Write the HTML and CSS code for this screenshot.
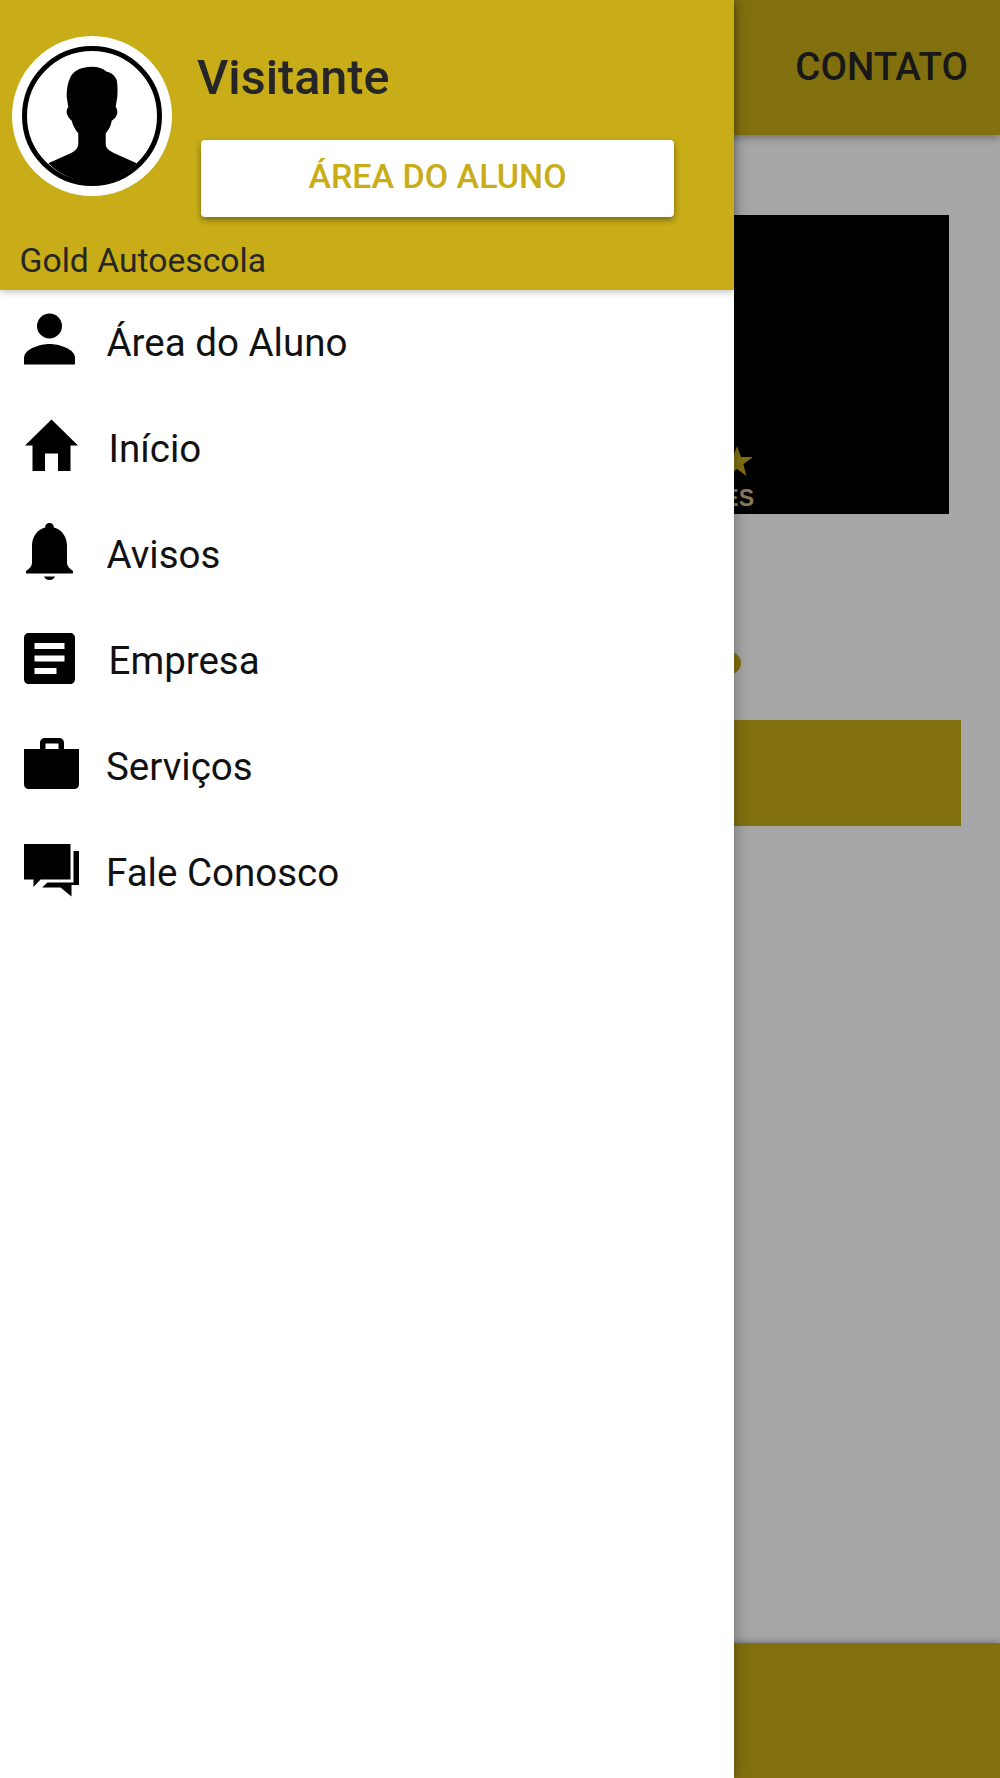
FILE: index.html
```html
<!DOCTYPE html>
<html lang="pt-BR">
<head>
    <meta charset="UTF-8">
    <meta name="viewport" content="width=device-width, initial-scale=1.0">
    <title>Gold Autoescola</title>
    <link rel="stylesheet" href="styles.css">
</head>
<body>
<div class="app">
    <!-- pagina atras do menu -->
    <div class="page">
        <header class="topbar">
            <span class="tab">CONTATO</span>
        </header>
        <main class="content">
            <div class="logo">
                <svg class="logo-star" viewBox="0 0 40 38"><polygon points="20,0 25,14 40,14 28,23 32,38 20,29 8,38 12,23 0,14 15,14"/></svg>
                <span class="logo-text">ES</span>
            </div>
            <div class="dot"></div>
            <div class="cta"></div>
        </main>
        <footer class="bottombar"></footer>
    </div>
    <div class="scrim"></div>

    <!-- menu lateral -->
    <aside class="drawer">
        <div class="drawer-head">
            <div class="head-row">
                <svg class="avatar" viewBox="0 0 160 160">
                    <circle cx="80" cy="80" r="80" fill="#fff"/>
                    <path d="M80 30.700C70 30.700 62 34 58.500 41 55.500 47 54.500 54 54.700 60.700L56.300 71.300C54.500 73 54.300 76 55 78 56 81 58 83.500 59.700 84.700 61 90 63.500 94 66.300 97.300L66.300 108C66.300 112 63 115 59.700 116.700L36.300 127.300A62 62 0 0 0 124.700 127.300L101.300 116.700C97 114.500 93.700 112 93.700 108L93.700 97.300C96.500 94 99 90 99.700 84.700 102 83.500 104.500 81 105.300 77.300 105.500 75 105 72.500 103.700 70.700L105.300 60.700C105.800 54 105.500 48 104.700 44 102 38 98.500 36.500 94.700 35.700 91 32.500 86 30.700 80 30.700Z"/>
                    <circle cx="80" cy="80" r="67.500" fill="none" stroke="#000" stroke-width="5"/>
                </svg>
                <div class="head-col">
                    <div class="user-name">Visitante</div>
                    <button class="login-btn" type="button">ÁREA DO ALUNO</button>
                </div>
            </div>
            <div class="brand">Gold Autoescola</div>
        </div>
        <ul class="menu">
            <li class="menu-item">
                <svg class="menu-icon" viewBox="0 0 64 64"><circle cx="33.500" cy="19" r="12.500"/><path d="M8 57.500V51C8 41.500 25 37 33.500 37S59 41.500 59 51V57.500Z"/></svg>
                <span class="menu-label">Área do Aluno</span>
            </li>
            <li class="menu-item">
                <svg class="menu-icon" viewBox="0 0 64 64"><path d="M9 32.500L35.500 6.500 62 32.500H54.500V58H42V40.500H29V58H16.500V32.500Z"/></svg>
                <span class="menu-label shift-2">Início</span>
            </li>
            <li class="menu-item">
                <svg class="menu-icon" viewBox="0 0 64 64"><path d="M33.500 4C36 4 38 6 37.800 8.500 46 10.500 51 18 51 27V44C51 47 53 49 57 52V54.500H10V52C14 49 16 47 16 44V27C16 18 21 10.500 29.200 8.500 29 6 31 4 33.500 4Z"/><path d="M28 57.500H39C38 60 36 61 33.500 61S29 60 28 57.500Z"/></svg>
                <span class="menu-label">Avisos</span>
            </li>
            <li class="menu-item">
                <svg class="menu-icon" viewBox="0 0 64 64"><path fill-rule="evenodd" d="M13 7H54C57 7 59 9 59 12V53C59 56 57 58 54 58H13C10 58 8 56 8 53V12C8 9 10 7 13 7ZM18.500 17V23H48.500V17ZM18.500 29.500V35.500H48.500V29.500ZM18.500 42V48H40.500V42Z"/></svg>
                <span class="menu-label shift-2">Empresa</span>
            </li>
            <li class="menu-item">
                <svg class="menu-icon" viewBox="0 0 64 64"><path fill-rule="evenodd" d="M24 17V11C24 8 26 6 29 6H43C46 6 48 8 48 11V17H63V52C63 55 61 57 58 57H13C10 57 8 55 8 52V17ZM29.500 11.500V17H42.500V11.500Z"/></svg>
                <span class="menu-label shift-n">Serviços</span>
            </li>
            <li class="menu-item">
                <svg class="menu-icon" viewBox="0 0 64 64"><path d="M8 6H54.500V41.500H24.500L17.500 49V41.500H8Z"/><path d="M57.500 13H63V47H55.500V58.500L44.500 49.500 26 49.500 31.500 44.500H57.500Z"/></svg>
                <span class="menu-label shift-n">Fale Conosco</span>
            </li>
        </ul>
    </aside>
</div>
</body>
</html>
```

FILE: styles.css
```css
* {
    box-sizing: border-box;
}

body {
    margin: 0;
    background-color: white;
    font-family: Roboto, "Liberation Sans", sans-serif;
}

.app {
    position: relative;
    width: 1000px;
    height: 1778px;
    overflow: hidden;
}

/* pagina de fundo */
.page {
    display: flex;
    flex-direction: column;
    height: 100%;
}

.topbar {
    display: flex;
    align-items: center;
    justify-content: flex-end;
    height: 135px;
    padding: 0 32px 0 0;
    background-color: #c8ad18;
    box-shadow: 0 3px 8px rgba(0, 0, 0, 0.3);
}

.tab {
    font-size: 38.5px;
    font-weight: 500;
    color: #262626;
    margin-top: -3px;
}

.content {
    flex: 1;
    padding-top: 80px;
}

.logo {
    display: flex;
    flex-direction: column;
    align-items: flex-end;
    justify-content: flex-end;
    gap: 9px;
    width: 898px;
    height: 299px;
    margin-left: 51px;
    padding: 0 195px 3px 0;
    background-color: black;
}

.logo-star {
    width: 32px;
    height: 30px;
    margin-right: 1px;
    fill: #c8ad18;
}

.logo-text {
    font-family: "Liberation Sans", sans-serif;
    font-size: 23px;
    font-weight: bold;
    line-height: 26px;
    color: #d4bc88;
}

.dot {
    width: 22px;
    height: 22px;
    margin: 138px 0 0 719px;
    border-radius: 50%;
    background-color: #c8ad18;
}

.cta {
    width: 922px;
    height: 106px;
    margin: 46px 0 0 39px;
    background-color: #c8ad18;
}

.bottombar {
    height: 135px;
    background-color: #c8ad18;
    box-shadow: 0 -2px 6px rgba(0, 0, 0, 0.25);
}

.scrim {
    position: absolute;
    top: 0;
    left: 0;
    right: 0;
    bottom: 0;
    background-color: rgba(0, 0, 0, 0.35);
}

/* menu lateral */
.drawer {
    position: absolute;
    top: 0;
    left: 0;
    width: 734px;
    height: 100%;
    background-color: white;
    box-shadow: 0 0 14px rgba(0, 0, 0, 0.35);
}

.drawer-head {
    display: flex;
    flex-direction: column;
    height: 290px;
    background-color: #c8ad18;
    box-shadow: 0 2px 7px rgba(0, 0, 0, 0.25);
}

.head-row {
    display: flex;
    padding: 36px 0 0 12px;
}

.avatar {
    width: 160px;
    height: 160px;
}

.head-col {
    margin-left: 25px;
}

.user-name {
    margin-top: 15px;
    font-size: 48.500px;
    font-weight: 500;
    line-height: 54px;
    color: #262626;
}

.login-btn {
    display: block;
    width: 473px;
    height: 77px;
    margin: 35px 0 0 4px;
    padding: 0 0 5px;
    border: 0;
    border-radius: 4px;
    background-color: white;
    box-shadow: 0 3px 6px rgba(0, 0, 0, 0.4);
    font-family: inherit;
    font-size: 34px;
    font-weight: 500;
    color: #c8ad18;
}

.brand {
    margin-top: auto;
    padding: 0 0 7px 19.500px;
    font-size: 33.700px;
    line-height: 44px;
    color: #262626;
}

.menu {
    display: flex;
    flex-direction: column;
    gap: 14.200px;
    margin: 0;
    padding: 3px 0 0;
    list-style: none;
}

.menu-item {
    display: flex;
    align-items: center;
    height: 92px;
    padding-left: 16px;
}

.menu-icon {
    flex: none;
    width: 64px;
    height: 64px;
    fill: black;
}

.menu-label {
    margin-top: 6px;
    margin-left: 26.500px;
    font-size: 38.500px;
    color: #111;
}

.shift-2 {
    margin-left: 28.500px;
}

.shift-n {
    margin-left: 26px;
}
```
